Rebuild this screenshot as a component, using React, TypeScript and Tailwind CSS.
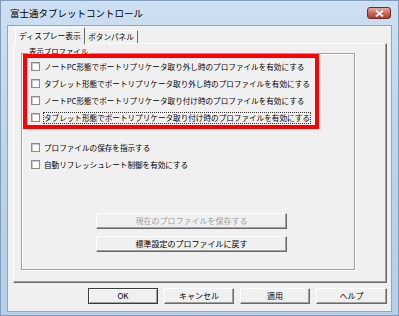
const font = { fontFamily: '"Noto Sans CJK JP", "Noto Sans CJK SC", sans-serif' };

const profileRows = [
  "ノートPC形態でポートリプリケータ取り外し時のプロファイルを有効にする",
  "タブレット形態でポートリプリケータ取り外し時のプロファイルを有効にする",
  "ノートPC形態でポートリプリケータ取り付け時のプロファイルを有効にする",
  "タブレット形態でポートリプリケータ取り付け時のプロファイルを有効にする",
];

const otherRows = ["プロファイルの保存を指示する", "自動リフレッシュレート制御を有効にする"];

function CheckBox() {
  return (
    <span className="w-[9px] h-[9px] shrink-0 bg-white border border-[#8c8c8c] shadow-[inset_1px_1px_0_#c8c8c8]" />
  );
}

function CheckRow({ label, focused }: { label: string; focused?: boolean }) {
  return (
    <div className="h-[17px] flex items-center gap-[4px] text-[7.6px] leading-none text-black whitespace-nowrap">
      <CheckBox />
      <span
        className={
          focused ? "leading-[10px] border border-dotted border-[#333] -ml-[1px]" : ""
        }
      >
        {label}
      </span>
    </div>
  );
}

function ClassicButton({
  label,
  className = "",
  disabled,
  isDefault,
}: {
  label: string;
  className?: string;
  disabled?: boolean;
  isDefault?: boolean;
}) {
  return (
    <div
      className={
        "h-[16px] flex items-center justify-center text-[8px] leading-none whitespace-nowrap bg-[#f0f0f0] border " +
        (isDefault
          ? "border-[#3c3c3c] shadow-[inset_1px_1px_0_#fff,inset_-1px_-1px_0_#a0a0a0] "
          : "border-t-white border-l-white border-r-[#696969] border-b-[#696969] shadow-[inset_-1px_-1px_0_#a0a0a0] ") +
        (disabled ? "text-[#a0a0a0] " : "text-black ") +
        className
      }
    >
      {label}
    </div>
  );
}

export default function App() {
  return (
    <div
      style={font}
      className="w-[399px] h-[316px] box-border border border-[#7f9db9] bg-gradient-to-b from-[#cddff2] via-[#bdd3eb] to-[#b7cee8] pl-[6px] pr-[6px] pb-[3px] flex flex-col"
    >
      {/* title bar */}
      <div className="h-[24px] flex items-center justify-between shrink-0">
        <span className="pl-[3px] pt-[1px] text-[9.5px] leading-none text-black">富士通タブレットコントロール</span>
        <div className="mr-[1px] w-[24px] h-[12px] rounded-[3px] border border-[#6e2b24] bg-gradient-to-b from-[#e7a99d] via-[#d0675b] to-[#b7392e] flex items-center justify-center">
          <svg width="9" height="7" viewBox="0 0 9 7">
            <path d="M1 0.5 L8 6.5 M8 0.5 L1 6.5" stroke="#fff" strokeWidth="1.8" />
          </svg>
        </div>
      </div>

      {/* client area */}
      <div className="flex-1 border border-[#8fa7c4] bg-[#f0f0f0] flex flex-col pt-[1px] pl-[5px] pr-[4px]">
        {/* tabs */}
        <div className="h-[16px] flex items-end pl-[2px] shrink-0">
          <div className="relative z-10 -mb-px h-[17px] w-[70px] flex items-center justify-center bg-[#f0f0f0] border-t border-l border-white border-r border-r-[#696969] text-[7.8px] leading-none text-black whitespace-nowrap">
            ディスプレー表示
          </div>
          <div className="h-[13px] w-[53px] flex items-center justify-center bg-[#f0f0f0] border-t border-white border-r border-r-[#696969] text-[7.6px] leading-none text-black whitespace-nowrap">
            ボタンパネル
          </div>
        </div>

        {/* tab panel */}
        <div className="h-[240px] w-[374px] border border-t-white border-l-white border-r-[#696969] border-b-[#696969] shadow-[inset_-1px_-1px_0_#a0a0a0] pl-[7px] pt-[9px] shrink-0">
          <div className="relative w-[334px] h-[217px] border border-[#a0a0a0] shadow-[inset_1px_1px_0_#fff,1px_1px_0_#fff]">
            <span className="absolute left-[6px] top-[-7px] px-[1px] bg-[#f0f0f0] text-[7.4px] leading-none text-black whitespace-nowrap">
              表示プロファイル
            </span>

            <div className="relative ml-[1px] mt-0 w-[296px] h-[75px] border-[4px] border-[#ff0000] pl-[4px] pt-0">
              {profileRows.map((r, i) => (
                <CheckRow key={r} label={r} focused={i === 3} />
              ))}
            </div>

            <div className="mt-[10px] pl-[9px]">
              {otherRows.map((r) => (
                <CheckRow key={r} label={r} />
              ))}
            </div>

            <div className="ml-[74px] mt-[40px] flex flex-col gap-[7px]">
              <ClassicButton label="現在のプロファイルを保存する" className="w-[191px]" disabled />
              <ClassicButton label="標準設定のプロファイルに戻す" className="w-[191px]" />
            </div>
          </div>
        </div>

        {/* dialog buttons */}
        <div className="mt-[5px] flex justify-end gap-[6px]">
          <ClassicButton label="OK" className="w-[70px]" isDefault />
          <ClassicButton label="キャンセル" className="w-[70px]" />
          <ClassicButton label="適用" className="w-[70px]" />
          <ClassicButton label="ヘルプ" className="w-[71px]" />
        </div>
      </div>
    </div>
  );
}
